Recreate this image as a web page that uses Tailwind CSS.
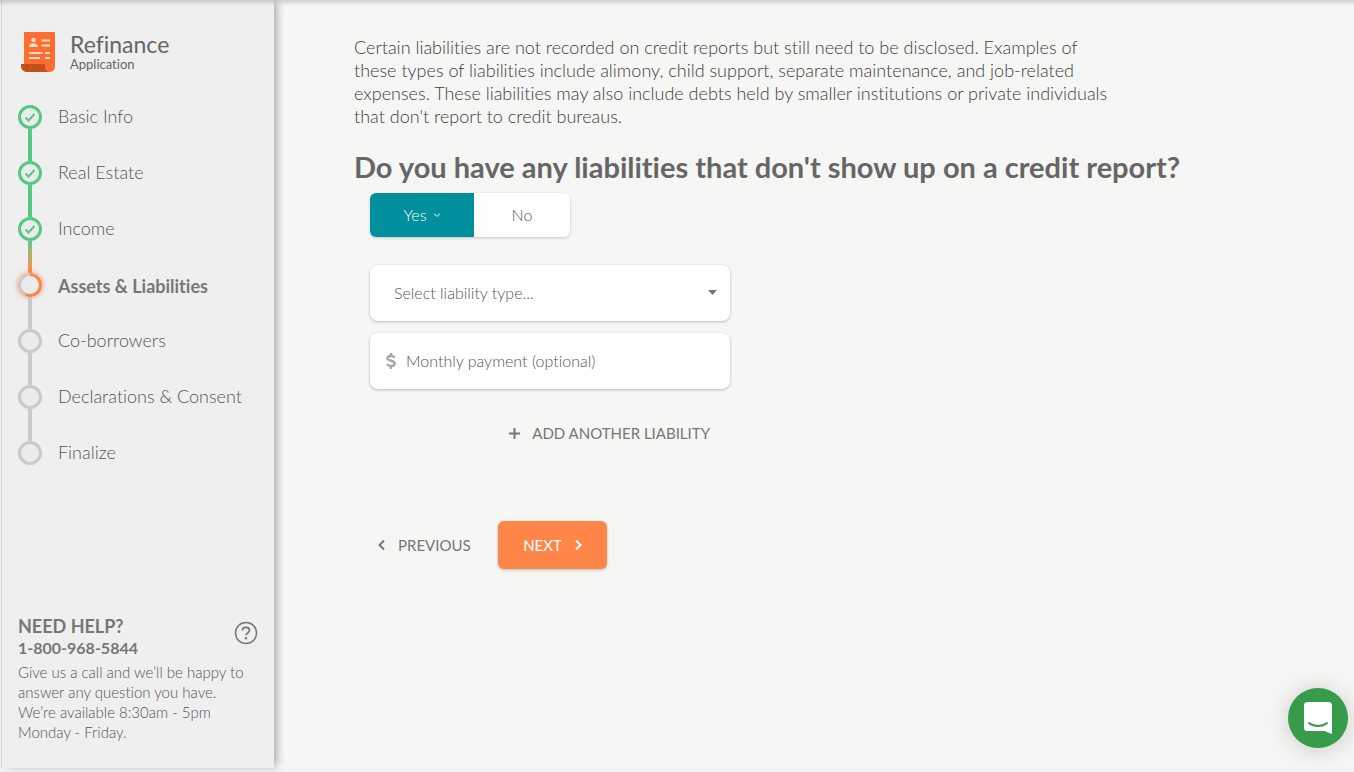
<!DOCTYPE html>
<html lang="en">
<head>
<meta charset="utf-8">
<meta name="viewport" content="width=device-width, initial-scale=1">
<title>Refinance Application</title>
<script src="https://cdn.jsdelivr.net/npm/@tailwindcss/browser@4"></script>
</head>
<body class="flex min-h-screen bg-[#f1f2f5] pb-1 pl-px font-['Lato','Open_Sans',sans-serif] font-light text-[#555] [font-variant-ligatures:none]">
  <div class="pointer-events-none fixed inset-x-0 top-0 z-20 h-1.5 bg-linear-to-b from-black/15 to-transparent"></div>

  <aside class="z-10 flex w-[273px] shrink-0 flex-col border-l border-[#d6d8da] bg-[#efefef] px-4 pt-8 pb-[26px] shadow-[5px_0_8px_-2px_rgba(0,0,0,0.3)]">
    <header class="flex items-center gap-[15px] pl-[3px]">
      <svg class="h-10 w-[34px] shrink-0" viewBox="0 0 34 40" aria-hidden="true">
        <path fill="#ff6e30" d="M3 0h31v34.500a5.500 5.500 0 0 1-5.500 5.500H14V32H3z"/>
        <path fill="#c54e1d" d="M0 32h24v2.500c0 3 2 5.500 5 5.500H6.500C2.500 40 0 37.500 0 34z"/>
        <g fill="#ffdccc">
          <circle cx="12.500" cy="8" r="2.300"/>
          <path d="M8 15c0-2.300 2-3.700 4.500-3.700S17 12.700 17 15z"/>
          <path d="M20.500 7.500h8.500v2h-8.500zM20.500 12.500h8.500v2h-8.500zM8 20h13.500v2H8zM24 20h5v2h-5zM8 25h11v2H8zM24 25h5v2h-5z"/>
        </g>
      </svg>
      <h1 class="flex flex-col font-normal text-[#666]">
        <span class="text-[23px] leading-6">Refinance</span>
        <span class="text-[13px] leading-4">Application</span>
      </h1>
    </header>

    <ol class="mt-[33px] text-[18px] leading-[23px]">
      <li class="flex gap-4">
        <div class="flex flex-col items-center">
          <svg class="size-6" viewBox="0 0 24 24" fill="none" stroke="#54c983" aria-hidden="true"><circle cx="12" cy="12" r="10.500" stroke-width="3" fill="#ebebeb"/><path d="M7.500 12.500l3 3 6-6.500" stroke-width="2"/></svg>
          <div class="h-8 w-1 bg-[#54c983]"></div>
        </div>
        <span>Basic Info</span>
      </li>
      <li class="flex gap-4">
        <div class="flex flex-col items-center">
          <svg class="size-6" viewBox="0 0 24 24" fill="none" stroke="#54c983" aria-hidden="true"><circle cx="12" cy="12" r="10.500" stroke-width="3" fill="#ebebeb"/><path d="M7.500 12.500l3 3 6-6.500" stroke-width="2"/></svg>
          <div class="h-8 w-1 bg-[#54c983]"></div>
        </div>
        <span>Real Estate</span>
      </li>
      <li class="flex gap-4">
        <div class="flex flex-col items-center">
          <svg class="size-6" viewBox="0 0 24 24" fill="none" stroke="#54c983" aria-hidden="true"><circle cx="12" cy="12" r="10.500" stroke-width="3" fill="#ebebeb"/><path d="M7.500 12.500l3 3 6-6.500" stroke-width="2"/></svg>
          <div class="h-8 w-1 bg-linear-to-b from-[#54c983] to-[#ff8448]"></div>
        </div>
        <span>Income</span>
      </li>
      <li class="flex gap-4" aria-current="step">
        <div class="flex flex-col items-center">
          <svg class="size-6 rounded-full shadow-[0_0_5px_#ff8448]" viewBox="0 0 24 24" fill="none" aria-hidden="true"><circle cx="12" cy="12" r="10.500" stroke-width="3" stroke="#c9c9c9" fill="#ebebeb"/><path d="M12 1.500a10.500 10.500 0 1 1-4.500 20" stroke="#ff8448" stroke-width="3"/></svg>
          <div class="h-8 w-1 bg-[#c9c9c9]"></div>
        </div>
        <span class="pt-0.5 font-bold text-[#777]">Assets &amp; Liabilities</span>
      </li>
      <li class="flex gap-4">
        <div class="flex flex-col items-center">
          <div class="size-6 rounded-full border-3 border-[#c9c9c9] bg-[#ebebeb]"></div>
          <div class="h-8 w-1 bg-[#c9c9c9]"></div>
        </div>
        <span>Co-borrowers</span>
      </li>
      <li class="flex gap-4">
        <div class="flex flex-col items-center">
          <div class="size-6 rounded-full border-3 border-[#c9c9c9] bg-[#ebebeb]"></div>
          <div class="h-8 w-1 bg-[#c9c9c9]"></div>
        </div>
        <span>Declarations &amp; Consent</span>
      </li>
      <li class="flex gap-4">
        <div class="size-6 rounded-full border-3 border-[#c9c9c9] bg-[#ebebeb]"></div>
        <span>Finalize</span>
      </li>
    </ol>

    <footer class="mt-auto">
      <div class="flex items-center justify-between">
        <div class="font-bold text-[#777]">
          <h2 class="text-[18px] leading-6">NEED HELP?</h2>
          <a href="tel:18009685844" class="block text-[16px] leading-5">1-800-968-5844</a>
        </div>
        <svg class="mb-1.5 size-6" viewBox="0 0 24 24" fill="none" stroke="#777" aria-hidden="true"><circle cx="12" cy="12" r="10.500" stroke-width="1.500"/><path d="M8.500 9.500c0-2 1.500-3.200 3.500-3.200s3.500 1.200 3.500 3c0 2.700-3.500 2.500-3.500 5" stroke-width="1.800"/><circle cx="12" cy="17.300" r="1.200" fill="#777" stroke="none"/></svg>
      </div>
      <p class="mt-1 max-w-[232px] text-[15px] leading-5">Give us a call and we’ll be happy to answer any question you have. We’re available 8:30am - 5pm Monday - Friday.</p>
    </footer>
  </aside>

  <main class="min-w-0 flex-1 bg-[#f6f6f4] px-20 pt-9">
    <p class="max-w-[760px] text-[18px] leading-[23px] text-[#404040]">Certain liabilities are not recorded on credit reports but still need to be disclosed. Examples of these types of liabilities include alimony, child support, separate maintenance, and job-related expenses. These liabilities may also include debts held by smaller institutions or private individuals that don't report to credit bureaus.</p>
    <h2 class="mt-[21px] text-[29px] leading-9 font-bold text-[#666]">Do you have any liabilities that don't show up on a credit report?</h2>

    <form class="mt-2 max-w-[376px] pl-4 text-[16px]">
      <div class="inline-flex h-11 overflow-hidden rounded-md bg-white align-top shadow-[0_1px_3px_rgba(0,0,0,0.2)]">
        <button type="button" aria-pressed="true" class="flex w-[104px] items-center justify-center gap-2 bg-[#008f9c] text-white">Yes
          <svg class="size-1.5" viewBox="0 0 6 6" fill="none" stroke="currentColor" aria-hidden="true"><path d="M0 1.500l3 3 3-3"/></svg>
        </button>
        <button type="button" aria-pressed="false" class="w-24">No</button>
      </div>

      <div class="relative mt-7">
        <select aria-label="Liability type" class="h-14 w-full appearance-none rounded-lg bg-white pl-6 shadow-[0_1px_3px_rgba(0,0,0,0.25)]">
          <option>Select liability type...</option>
        </select>
        <svg class="pointer-events-none absolute top-[25px] right-[13px] h-[5px] w-[9px]" viewBox="0 0 9 5" fill="#777" aria-hidden="true"><path d="M0 0h9L4.500 5z"/></svg>
      </div>

      <div class="mt-3 flex h-14 items-center gap-2.5 rounded-lg bg-white px-4 shadow-[0_1px_3px_rgba(0,0,0,0.25)]">
        <svg class="h-4 w-2.5 shrink-0" viewBox="0 0 10 16" fill="none" stroke="#a9a9a9" aria-hidden="true"><path d="M8.700 4.700C8 3.500 6.700 3 5 3 3 3 1.500 3.800 1.500 5.300c0 3.200 7.200 1.800 7.200 5.200 0 1.600-1.600 2.500-3.700 2.500-2 0-3.300-.700-4-2M5 0v3M5 13v3" stroke-width="2.500"/></svg>
        <input type="text" aria-label="Monthly payment" placeholder="Monthly payment (optional)" class="min-w-0 flex-1 bg-transparent outline-none placeholder:text-[#555]">
      </div>

      <div class="mt-8 flex justify-end pr-5 font-normal text-[#777]">
        <button type="button" class="flex items-center gap-3 text-[15px] leading-6">
          <svg class="size-[11px]" viewBox="0 0 11 11" fill="none" stroke="currentColor" stroke-width="2" aria-hidden="true"><path d="M5.500 0v11M0 5.500h11"/></svg>
          ADD ANOTHER LIABILITY
        </button>
      </div>

      <div class="mt-[76px] flex items-center text-[15px] font-normal text-[#777]">
        <button type="button" class="flex h-12 w-32 items-center gap-3 pl-2">
          <svg class="h-[10px] w-2" viewBox="0 0 8 10" fill="none" stroke="currentColor" stroke-width="2" aria-hidden="true"><path d="M6 .500L1.500 5 6 9.500"/></svg>
          PREVIOUS
        </button>
        <button type="submit" class="flex h-12 w-[109px] items-center justify-center gap-3 rounded-md bg-[#ff8548] text-white shadow-[0_1px_3px_rgba(0,0,0,0.25)]">
          NEXT
          <svg class="h-[10px] w-2" viewBox="0 0 8 10" fill="none" stroke="currentColor" stroke-width="2" aria-hidden="true"><path d="M2 .500L6.500 5 2 9.500"/></svg>
        </button>
      </div>
    </form>
  </main>

  <button type="button" aria-label="Open chat" class="fixed right-1.5 bottom-6 z-30 flex size-[60px] items-center justify-center rounded-full bg-[#389b4c] shadow-[0_2px_24px_rgba(0,0,0,0.18)]">
    <svg class="h-8 w-7" viewBox="0 0 28 32" aria-hidden="true"><path fill="#fff" d="M3.500 0h21A3.500 3.500 0 0 1 28 3.500V32l-7.500-3h-17A3.500 3.500 0 0 1 0 25.500v-22A3.500 3.500 0 0 1 3.500 0z"/><path fill="none" stroke="#389b4c" stroke-width="2" stroke-linecap="round" d="M5 21c5 4 13 4 18 0"/></svg>
  </button>
</body>
</html>
